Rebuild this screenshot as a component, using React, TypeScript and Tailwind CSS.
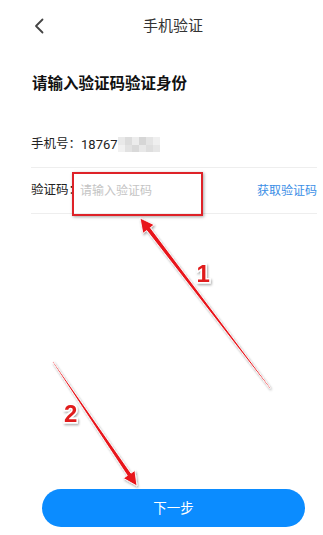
import React from "react";

const font = { fontFamily: 'Roboto, "Noto Sans CJK SC", "Noto Sans", sans-serif' };

function Blur() {
  const cells = [
    "#e9e9e9", "#dcdcdc", "#ececec", "#d6d6d6", "#e4e4e4", "#efefef",
    "#f1f1f1", "#e2e2e2", "#d9d9d9", "#e8e8e8", "#dedede", "#e6e6e6",
  ];
  return (
    <div className="ml-[0px] grid grid-cols-6 w-[42px] h-[15px]">
      {cells.map((c, i) => (
        <div key={i} style={{ backgroundColor: c }} />
      ))}
    </div>
  );
}

export default function App() {
  return (
    <div className="relative w-[323px] h-[535px] bg-white overflow-hidden" style={font}>
      {/* header */}
      <div className="h-[52px] flex items-center pl-[34px]">
        <svg width="10" height="16" viewBox="0 0 10 16" fill="none">
          <polyline points="8.5,1.5 2,8 8.5,14.5" stroke="#444" strokeWidth="1.8" strokeLinecap="round" strokeLinejoin="round" />
        </svg>
        <span className="ml-[99px] text-[15px] text-[#333] leading-none">手机验证</span>
      </div>

      {/* heading */}
      <div className="mt-[21px] pl-[32px] text-[15.5px] font-bold text-[#111] leading-[22px]">
        请输入验证码验证身份
      </div>

      {/* rows */}
      <div className="mt-[27px] ml-[31px] mr-[6px]">
        <div className="h-[46px] flex items-center border-b border-[#eeeeee] text-[12.5px] text-[#222]">
          <span>手机号：</span>
          <span className="text-[13px]">18767</span>
          <Blur />
        </div>
        <div className="h-[46px] flex items-center border-b border-[#eeeeee] text-[12.5px]">
          <span className="text-[#222]">验证码：</span>
          <span className="ml-[-1px] text-[12px] text-[#c4c4c4]">请输入验证码</span>
          <span className="ml-auto text-[12px] text-[#3a8ee6]">获取验证码</span>
        </div>
      </div>

      {/* button */}
      <div className="mt-[275px] ml-[42px] w-[263px] h-[38px] rounded-full bg-[#0b8cff] flex items-center justify-center">
        <span className="text-[13.5px] text-white">下一步</span>
      </div>

      {/* annotation: red box */}
      <div className="absolute left-[72px] top-[172px] w-[131px] h-[44px] border-[2.5px] border-[#de2228] shadow-[1px_1px_3px_rgba(0,0,0,0.35)]" />

      {/* annotation: arrows and numbers */}
      <svg className="absolute left-0 top-0 pointer-events-none" width="323" height="535" viewBox="0 0 323 535">
        <defs>
          <filter id="sh" x="-20%" y="-20%" width="140%" height="140%">
            <feDropShadow dx="1" dy="1.5" stdDeviation="1.2" floodColor="#000" floodOpacity="0.35" />
          </filter>
        </defs>
        <g filter="url(#sh)">
          <polygon
            points="270.4,387.7 150.3,227.7 154.1,224.8 140,218 142.9,233.4 146.7,230.5 269.6,388.3"
            fill="#e8141a"
            stroke="#ffffff"
            strokeWidth="0.9"
            strokeLinejoin="round"
          />
          <polygon
            points="53.4,361.7 130.97,473.2 134.9,470.5 137,486 123.4,478.3 127.3,475.6 52.6,362.3"
            fill="#e8141a"
            stroke="#ffffff"
            strokeWidth="0.9"
            strokeLinejoin="round"
          />
          <text
            x="196.5"
            y="282"
            fontSize="24"
            fontWeight="bold"
            fontFamily='"Liberation Sans", Arial, sans-serif'
            fill="#e01b1b"
            stroke="#ffffff"
            strokeWidth="3"
            paintOrder="stroke"
          >
            1
          </text>
          <text
            x="64"
            y="422"
            fontSize="24"
            fontWeight="bold"
            fontFamily='"Liberation Sans", Arial, sans-serif'
            fill="#e01b1b"
            stroke="#ffffff"
            strokeWidth="3"
            paintOrder="stroke"
          >
            2
          </text>
        </g>
      </svg>
    </div>
  );
}
